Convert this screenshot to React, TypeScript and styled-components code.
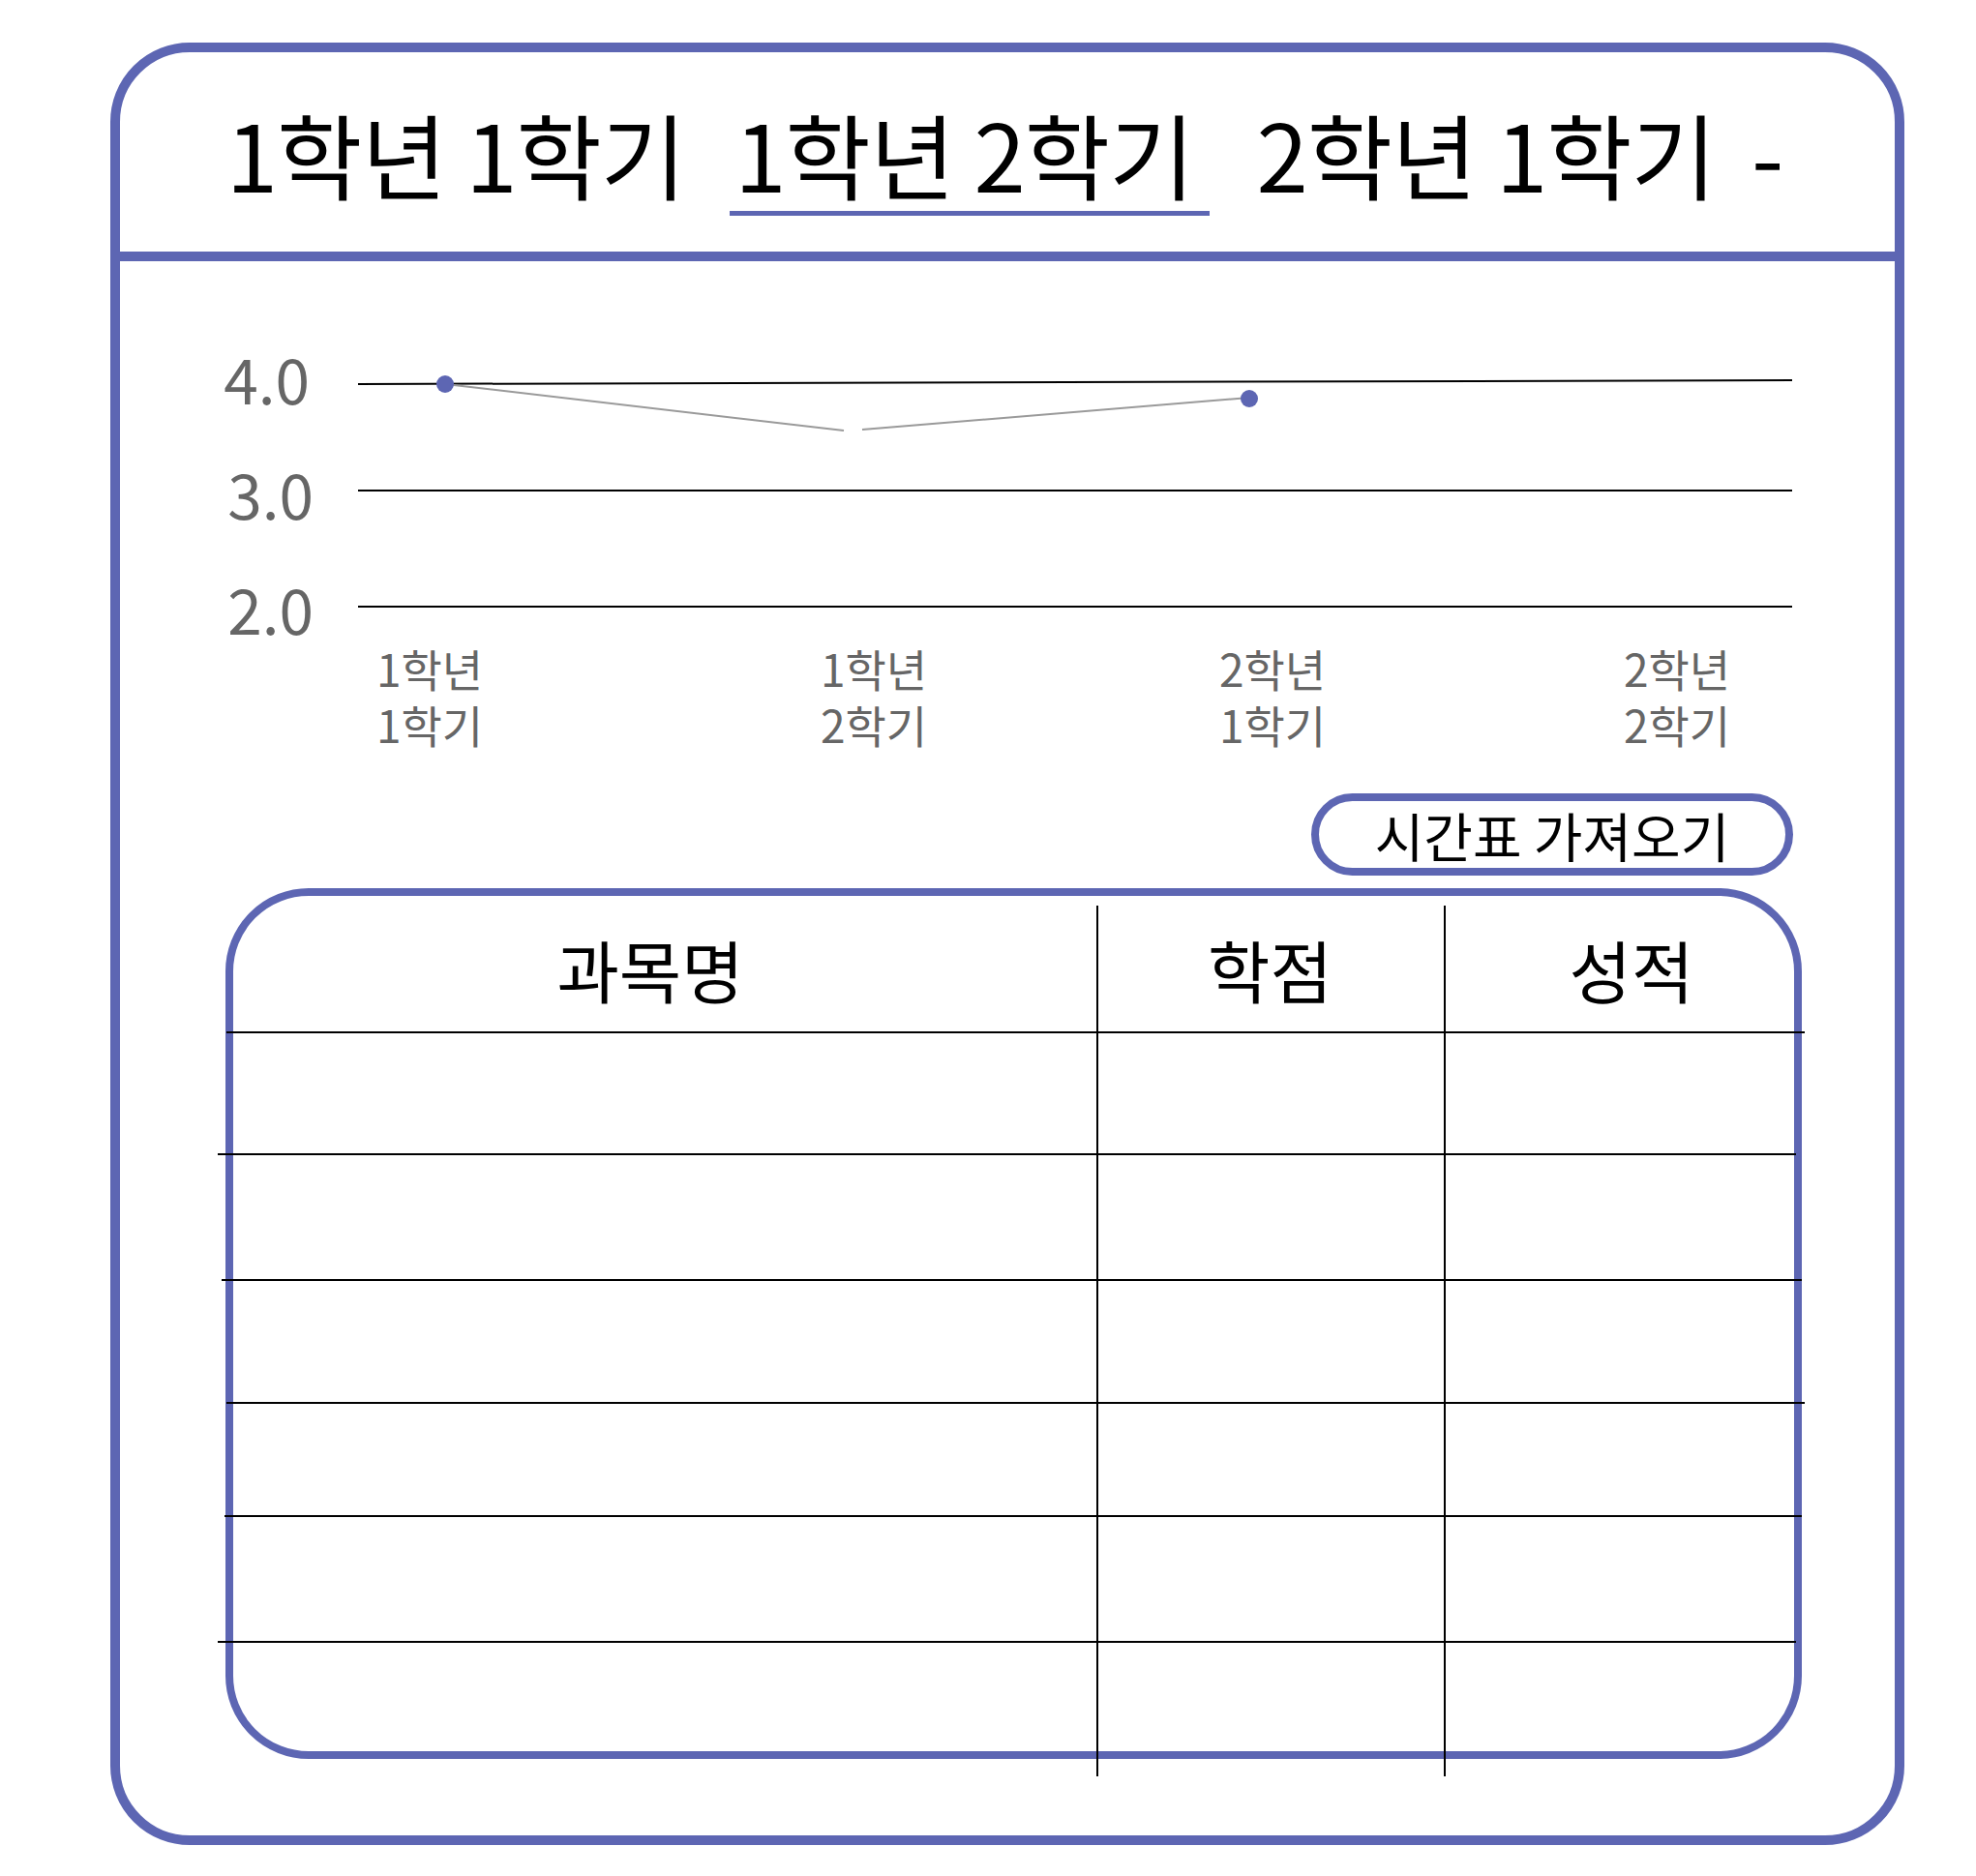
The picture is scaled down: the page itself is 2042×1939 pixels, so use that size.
import React from 'react'
import styled, { createGlobalStyle } from 'styled-components'

const BLUE = '#5d66b3'

const GlobalStyle = createGlobalStyle`
  html, body {
    margin: 0;
    padding: 0;
    background: #ffffff;
  }

  body {
    font-family: 'Noto Sans CJK KR', 'Noto Sans', sans-serif;
    color: #000000;
  }
`

export const Card = styled.div`
  box-sizing: border-box;
  margin: 44px 0 0 114px;
  width: 1854px;
  height: 1863px;
  border: 10px solid ${BLUE};
  border-radius: 82px;
  background: #ffffff;
  display: flex;
  flex-direction: column;
`

export const Header = styled.div`
  box-sizing: border-box;
  height: 216px;
  padding: 56px 10px 0 0;
  border-bottom: 10px solid ${BLUE};
  display: flex;
  justify-content: center;
  align-items: flex-start;
  gap: 30px;
`

export const Tab = styled.span<{ $active?: boolean; $space?: number }>`
  font-size: 96px;
  line-height: 96px;
  letter-spacing: -1px;
  margin-left: ${(p) => p.$space ?? 0}px;
  padding: 0 16px 12px 5px;
  border-bottom: 5px solid ${(p) => (p.$active ? BLUE : 'transparent')};
  white-space: pre;
  cursor: pointer;
`

export const Dash = styled.span`
  font-size: 96px;
  line-height: 96px;
  margin-left: -9px;
`

export const Body = styled.div`
  flex: 1;
  display: flex;
  flex-direction: column;
  padding: 0 96px 0 109px;
`

export const ChartSvg = styled.svg`
  display: block;
  overflow: visible;
  font-family: 'Noto Sans CJK KR', 'Noto Sans', sans-serif;
`

export const ButtonRow = styled.div`
  display: flex;
  justify-content: flex-end;
  margin-top: 20px;
  padding-right: 9px;
`

export const ImportButton = styled.button`
  box-sizing: border-box;
  width: 498px;
  height: 85px;
  border: 8px solid ${BLUE};
  border-radius: 43px;
  background: #ffffff;
  color: #000000;
  font-family: inherit;
  font-size: 55px;
  line-height: 1;
  display: flex;
  align-items: center;
  justify-content: center;
  padding: 0;
  cursor: pointer;
`

export const Table = styled.div`
  position: relative;
  box-sizing: border-box;
  margin-top: 13px;
  height: 900px;
  border: 8px solid ${BLUE};
  border-radius: 86px;
  display: flex;
  flex-direction: column;
`

const COLUMNS = '892px 359px 1fr'

export const HeadRow = styled.div`
  box-sizing: border-box;
  height: 142px;
  margin: 0 -11px 0 -7px;
  padding: 12px 11px 0 7px;
  display: grid;
  grid-template-columns: ${COLUMNS};
  align-items: center;
  border-bottom: 2px solid #000000;
`

export const HeadCell = styled.div<{ $shift?: number }>`
  text-align: center;
  font-size: 70px;
  line-height: 1;
  padding-left: ${(p) => Math.max(p.$shift ?? 0, 0) * 2}px;
  padding-right: ${(p) => Math.max(-(p.$shift ?? 0), 0) * 2}px;
`

export const Row = styled.div<{ $h: number; $l: number; $r: number; $last?: boolean }>`
  box-sizing: border-box;
  height: ${(p) => p.$h}px;
  flex: ${(p) => (p.$last ? 1 : 'none')};
  margin: 0 ${(p) => p.$r}px 0 ${(p) => p.$l}px;
  padding: 0 ${(p) => -p.$r}px 0 ${(p) => -p.$l}px;
  display: grid;
  grid-template-columns: ${COLUMNS};
  border-bottom: ${(p) => (p.$last ? 'none' : '2px solid #000000')};
`

export const Cell = styled.div`
  font-size: 40px;
`

export const ColumnLine = styled.div<{ $x: number }>`
  position: absolute;
  top: 10px;
  bottom: -26px;
  left: ${(p) => p.$x}px;
  width: 1.5px;
  background: #000000;
`

const tabs = [
  { label: '1학년 1학기', space: 0 },
  { label: '1학년 2학기', space: 0, active: true },
  { label: '2학년 1학기', space: 14 },
]

const grid = [
  { label: '4.0', x: 320, base: 418, y1: 397, y2: 393 },
  { label: '3.0', x: 324, base: 537, y1: 507, y2: 507 },
  { label: '2.0', x: 324, base: 656, y1: 627, y2: 627 },
]

const semesters = [
  { year: '1학년', term: '1학기', x: 444 },
  { year: '1학년', term: '2학기', x: 903 },
  { year: '2학년', term: '1학기', x: 1315 },
  { year: '2학년', term: '2학기', x: 1733 },
]

const rows = [
  { h: 126, l: -16, r: -2 },
  { h: 130, l: -12, r: -8 },
  { h: 127, l: -7, r: -11 },
  { h: 117, l: -9, r: -8 },
  { h: 130, l: -16, r: -2 },
  { h: 112, l: 0, r: 0, last: true },
]

function GpaChart() {
  return (
    <ChartSvg viewBox="233 270 1629 530" width={1629} height={530}>
      {grid.map((g) => (
        <g key={g.label}>
          <line x1={370} y1={g.y1} x2={1852} y2={g.y2} stroke="#000" strokeWidth={2} />
          <text x={g.x} y={g.base} textAnchor="end" fontSize={64} fill="#666">
            {g.label}
          </text>
        </g>
      ))}
      <polyline points="460,397 872,445" fill="none" stroke="#9a9a9a" strokeWidth={2} />
      <polyline points="891,444 1291,411" fill="none" stroke="#9a9a9a" strokeWidth={2} />
      <circle cx={460} cy={397} r={9} fill={BLUE} />
      <circle cx={1291} cy={412} r={9} fill={BLUE} />
      {semesters.map((s) => (
        <g key={s.x}>
          <text x={s.x} y={710} textAnchor="middle" fontSize={46} fill="#666">
            {s.year}
          </text>
          <text x={s.x} y={768} textAnchor="middle" fontSize={46} fill="#666">
            {s.term}
          </text>
        </g>
      ))}
    </ChartSvg>
  )
}

export default function App() {
  return (
    <>
      <GlobalStyle />
      <Card>
        <Header>
          {tabs.map((t) => (
            <Tab key={t.label} $active={t.active} $space={t.space}>
              {t.label}
            </Tab>
          ))}
          <Dash>-</Dash>
        </Header>
        <Body>
          <GpaChart />
          <ButtonRow>
            <ImportButton>시간표 가져오기</ImportButton>
          </ButtonRow>
          <Table>
            <HeadRow>
              <HeadCell $shift={-15}>과목명</HeadCell>
              <HeadCell>학점</HeadCell>
              <HeadCell $shift={13}>성적</HeadCell>
            </HeadRow>
            {rows.map((r, i) => (
              <Row key={i} $h={r.h} $l={r.l} $r={r.r} $last={r.last}>
                <Cell />
                <Cell />
                <Cell />
              </Row>
            ))}
            <ColumnLine $x={892} />
            <ColumnLine $x={1251} />
          </Table>
        </Body>
      </Card>
    </>
  )
}
